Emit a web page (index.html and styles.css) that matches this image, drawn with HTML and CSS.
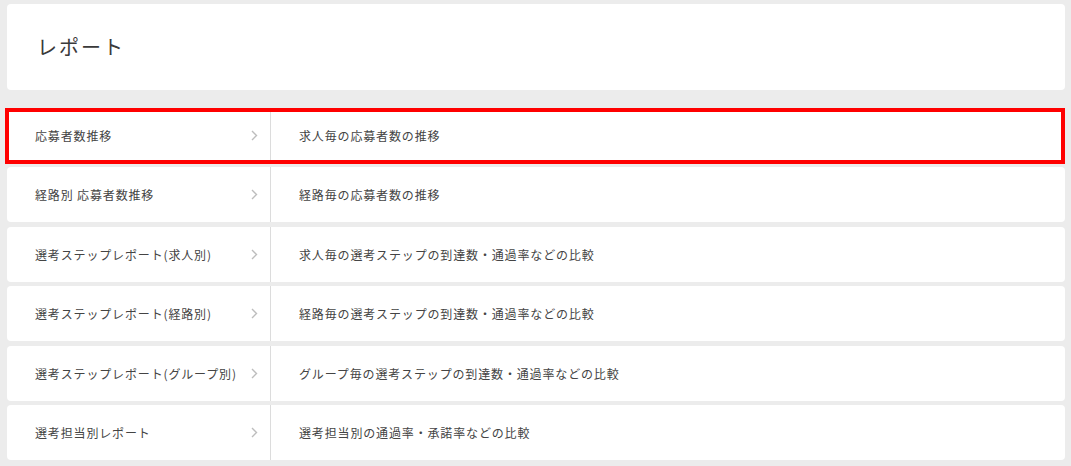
FILE: index.html
```html
<!DOCTYPE html>
<html lang="ja">
<head>
<meta charset="utf-8">
<title>レポート</title>
<link rel="stylesheet" href="styles.css">
</head>
<body>
<div class="page">
  <header class="head-card">
    <h1 class="title">レポート</h1>
  </header>
  <ul class="report-list">
    <li class="row selected">
      <div class="name"><span>応募者数推移</span><svg class="chev" viewBox="0 0 7 11" width="7" height="11"><polyline points="1,1 5.5,5.5 1,10" /></svg></div>
      <div class="desc">求人毎の応募者数の推移</div>
    </li>
    <li class="row">
      <div class="name"><span>経路別 応募者数推移</span><svg class="chev" viewBox="0 0 7 11" width="7" height="11"><polyline points="1,1 5.5,5.5 1,10" /></svg></div>
      <div class="desc">経路毎の応募者数の推移</div>
    </li>
    <li class="row">
      <div class="name"><span>選考ステップレポート(求人別)</span><svg class="chev" viewBox="0 0 7 11" width="7" height="11"><polyline points="1,1 5.5,5.5 1,10" /></svg></div>
      <div class="desc">求人毎の選考ステップの到達数・通過率などの比較</div>
    </li>
    <li class="row">
      <div class="name"><span>選考ステップレポート(経路別)</span><svg class="chev" viewBox="0 0 7 11" width="7" height="11"><polyline points="1,1 5.5,5.5 1,10" /></svg></div>
      <div class="desc">経路毎の選考ステップの到達数・通過率などの比較</div>
    </li>
    <li class="row">
      <div class="name"><span>選考ステップレポート(グループ別)</span><svg class="chev" viewBox="0 0 7 11" width="7" height="11"><polyline points="1,1 5.5,5.5 1,10" /></svg></div>
      <div class="desc">グループ毎の選考ステップの到達数・通過率などの比較</div>
    </li>
    <li class="row">
      <div class="name"><span>選考担当別レポート</span><svg class="chev" viewBox="0 0 7 11" width="7" height="11"><polyline points="1,1 5.5,5.5 1,10" /></svg></div>
      <div class="desc">選考担当別の通過率・承諾率などの比較</div>
    </li>
  </ul>
</div>
</body>
</html>
```

FILE: styles.css
```css
html, body {
  margin: 0;
  padding: 0;
  background: #ececec;
}
body {
  font-family: "Noto Sans CJK JP", "Noto Sans", "Liberation Sans", sans-serif;
  color: #444;
}
.page {
  padding: 4px 6px 0 7px;
}
.head-card {
  background: #fff;
  border-radius: 4px;
  height: 86px;
  display: flex;
  align-items: center;
  padding-left: 30px;
  box-sizing: border-box;
}
.title {
  margin: 0;
  font-size: 20px;
  font-weight: 400;
  letter-spacing: 2px;
  color: #3a3a3a;
  line-height: 1;
}
.report-list {
  list-style: none;
  margin: 18px 0 0;
  padding: 0;
  display: flex;
  flex-direction: column;
  gap: 4.4px;
}
.row {
  position: relative;
  background: #fff;
  border-radius: 4px;
  height: 55px;
  display: grid;
  grid-template-columns: 264px 1fr;
  font-size: 12px;
  letter-spacing: 0.85px;
}
.row.selected::after {
  content: "";
  position: absolute;
  top: 0;
  left: -2px;
  right: 0;
  bottom: -1px;
  border: 4px solid #ff0000;
  pointer-events: none;
}
.name {
  display: flex;
  align-items: center;
  justify-content: space-between;
  padding: 0 12px 0 28px;
  border-right: 1px solid #dcdcdc;
}
.chev {
  fill: none;
  stroke: #bdbdbd;
  stroke-width: 1.4;
}
.desc {
  display: flex;
  align-items: center;
  padding-left: 28px;
}
```
